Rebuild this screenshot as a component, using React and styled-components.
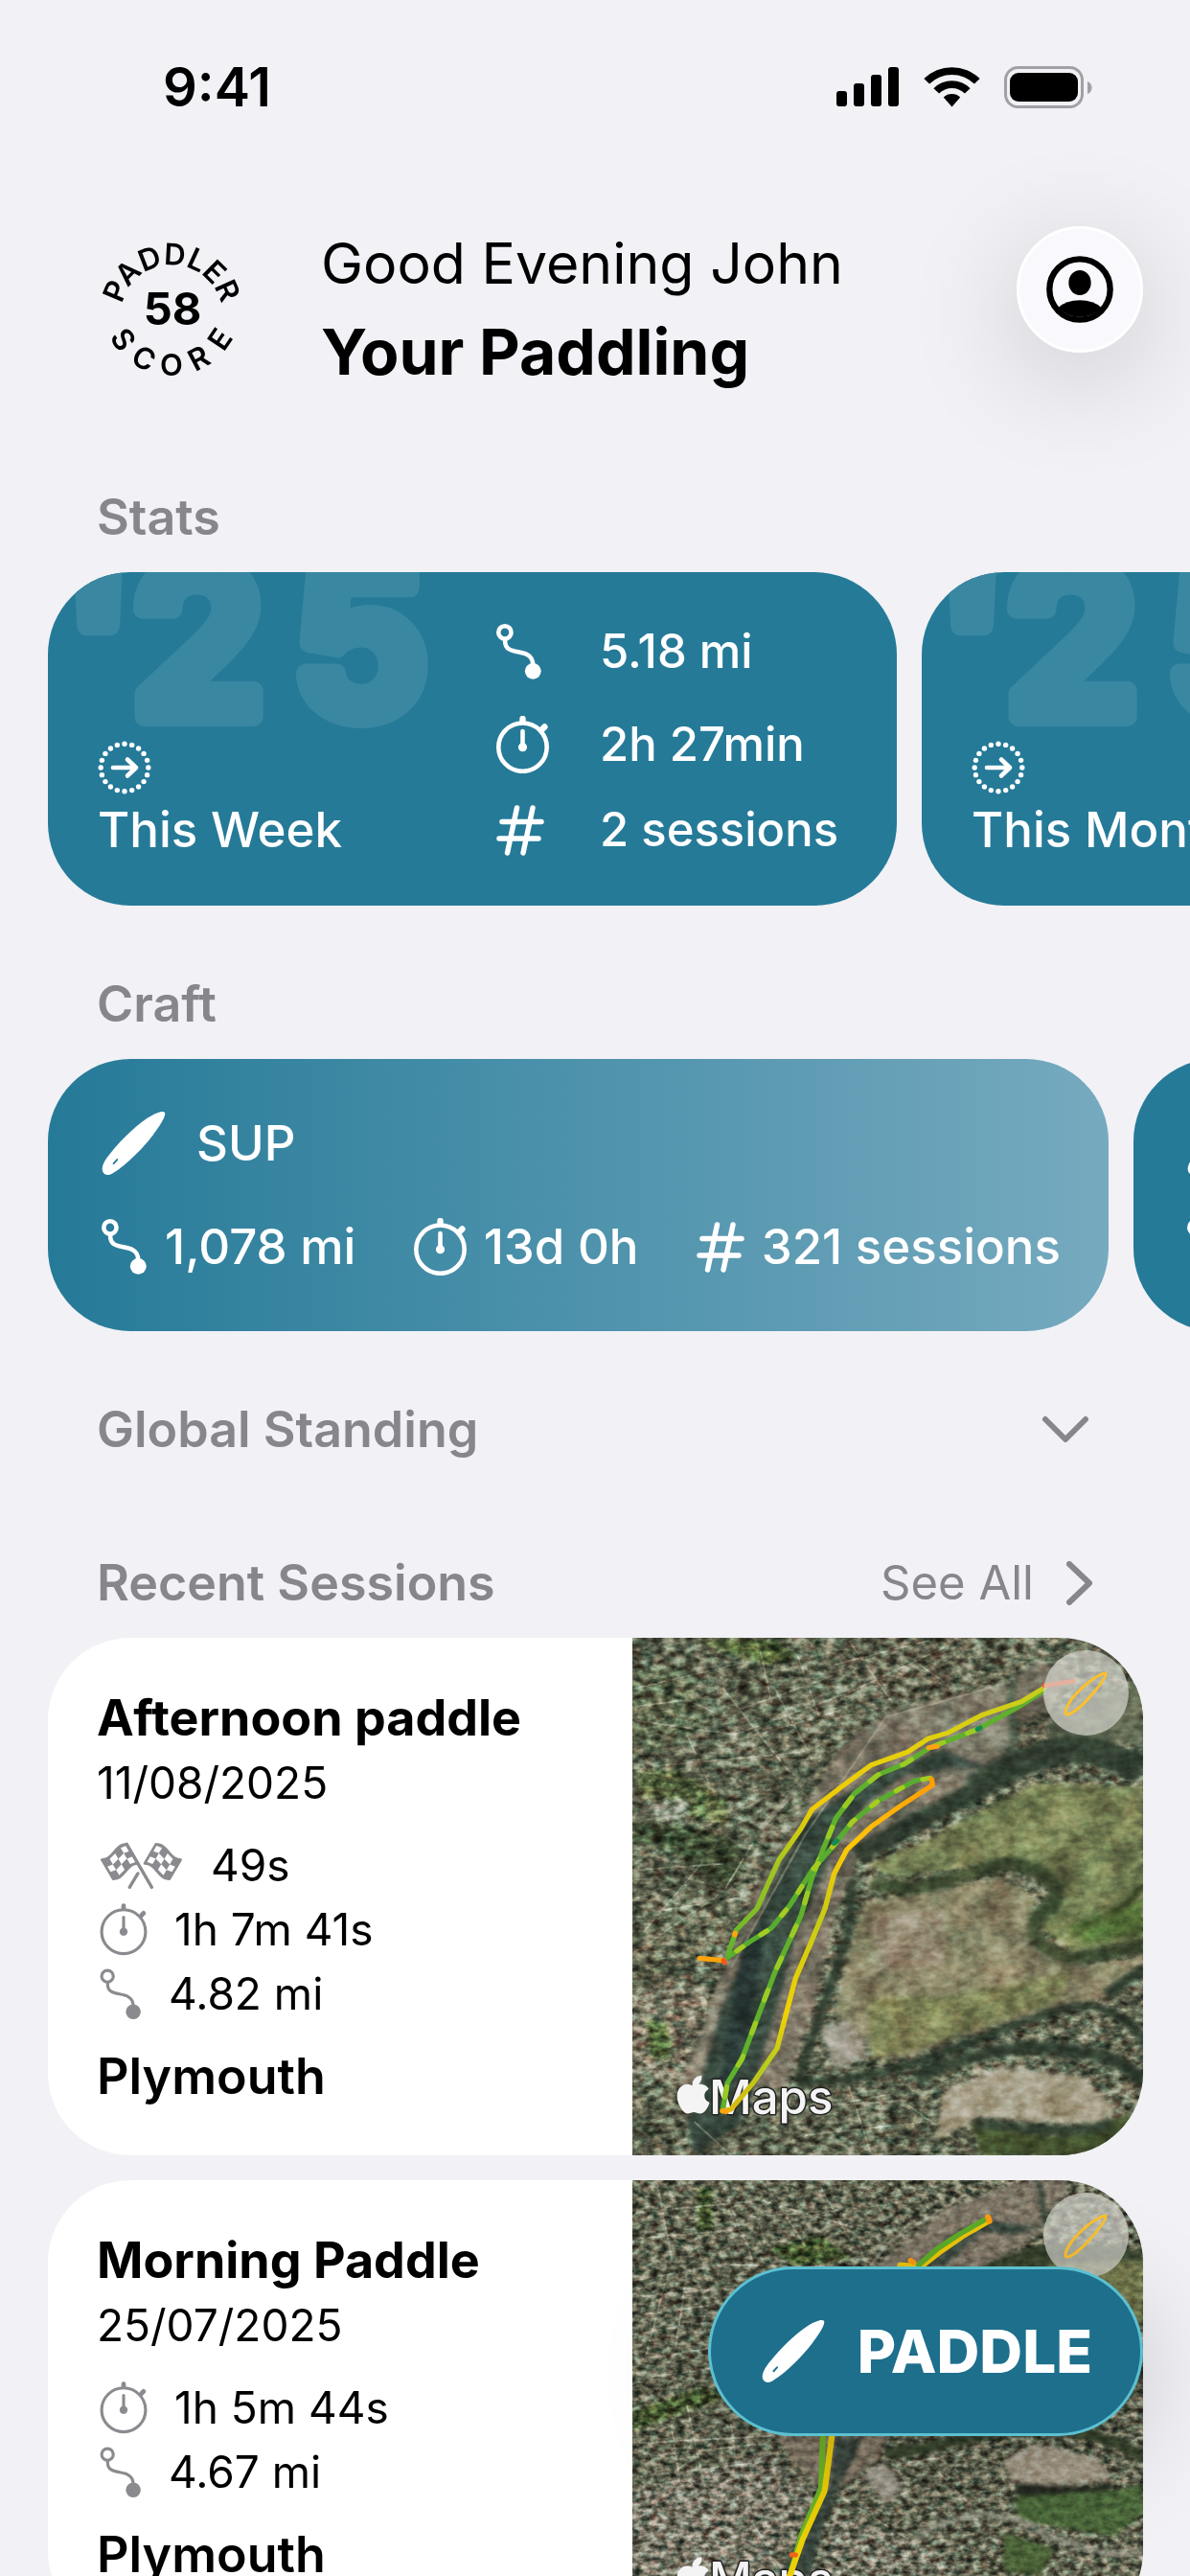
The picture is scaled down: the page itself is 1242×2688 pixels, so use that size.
import React from "react";
import styled, { createGlobalStyle } from "styled-components";
import { FaApple } from "react-icons/fa";

const statCards = [
    { id: "week", label: "This Week", distance: "5.18 mi", time: "2h 27min", sessions: "2 sessions" },
    { id: "month", label: "This Month", distance: "9.85 mi", time: "4h 12min", sessions: "4 sessions" },
];

const craftCards = [
    { id: "sup", name: "SUP", distance: "1,078 mi", time: "13d 0h", sessions: "321 sessions", faded: true },
    { id: "kayak", name: "Kayak", distance: "212 mi", time: "2d 4h", sessions: "48 sessions", faded: false },
];

const sessionList = [
    { id: 1, title: "Afternoon paddle", date: "11/08/2025", best: "49s", time: "1h 7m 41s", distance: "4.82 mi", place: "Plymouth" },
    { id: 2, title: "Morning Paddle", date: "25/07/2025", time: "1h 5m 44s", distance: "4.67 mi", place: "Plymouth" },
];

const StopwatchIcon = ({ size = 48, weight = 3 }) => (
    <svg width={size} viewBox="0 0 48 53" fill="none" stroke="currentColor" strokeLinecap="round" aria-hidden="true">
        <circle cx="24" cy="28.5" r="22" strokeWidth={weight} />
        <path d="M24 2.6V5M42 12l2-2" strokeWidth={weight + 1.6} />
        <path d="M24 14V28" strokeWidth={weight} />
        <circle cx="24" cy="28.5" r="4" fill="currentColor" stroke="none" />
    </svg>
);

const RouteIcon = ({ size = 42, weight = 3.4 }) => (
    <svg width={size} viewBox="0 0 42 51" fill="none" stroke="currentColor" strokeWidth={weight} aria-hidden="true">
        <circle cx="7.8" cy="7.8" r="5.8" />
        <path d="M8 14v2c0 11 13 8 20.500 12.200C32 30 33.500 33 33.500 38" />
        <circle cx="33.500" cy="43.200" r="7.400" fill="currentColor" stroke="none" />
    </svg>
);

const HashIcon = () => (
    <svg width="50" viewBox="0 0 50 53" fill="none" stroke="currentColor" strokeWidth="5.500" strokeLinecap="round" aria-hidden="true">
        <path d="M21.500 3L11.500 50M38 3L28 50M6 17.500H47M3 35H44" />
    </svg>
);

const BoardIcon = ({ size = 67, slot = "#2a7c9a" }) => (
    <svg width={size} viewBox="44 56 202 204" aria-hidden="true">
        <path fill="currentColor" d="M243 61C236 55 215 62 190 78C142 110 92 162 60 205C48 222 43 238 48 248C54 260 66 260 77 254C112 234 170 180 204 135C230 100 248 72 243 61Z" />
        <path d="M82 222L93 210" stroke={slot} strokeWidth="6" strokeLinecap="round" />
    </svg>
);

const ArrowIcon = () => {
    const dots = Array.from({ length: 20 }, (_, i) => (i * Math.PI) / 10);
    return (
        <svg width="56" height="56" viewBox="0 0 56 56" aria-hidden="true">
            {dots.map((a) => (
                <circle key={a} cx={28 + 24.8 * Math.sin(a)} cy={28 - 24.8 * Math.cos(a)} r="2.700" fill="#fff" />
            ))}
            <path d="M16 28H40M31 19.500L40 28L31 36.500" fill="none" stroke="#fff" strokeWidth="4.600" strokeLinecap="round" strokeLinejoin="round" />
        </svg>
    );
};

// point on the waving flag: u runs away from the pole, v runs down it
const flagPoint = (u, v) => {
    const x = 112 - 77 * u + 35 * v;
    const y = 56 + 48 * u + 60 * v - 7 * Math.sin(2 * Math.PI * u);
    return `${x.toFixed(1)},${y.toFixed(1)}`;
};

const flagOutline = [
    ...[0, 0.125, 0.25, 0.375, 0.5, 0.625, 0.75, 0.875, 1].map((u) => flagPoint(u, 0)),
    ...[1, 0.875, 0.75, 0.625, 0.5, 0.375, 0.25, 0.125, 0].map((u) => flagPoint(u, 1)),
].join(" ");

const flagChecks = [];
for (let c = 0; c < 4; c++) {
    for (let r = 0; r < 3; r++) {
        if ((c + r) % 2 === 0) {
            const u = 0.06 + c * 0.22;
            const v = 0.08 + r * 0.28;
            flagChecks.push([flagPoint(u, v), flagPoint(u + 0.22, v), flagPoint(u + 0.22, v + 0.28), flagPoint(u, v + 0.28)].join(" "));
        }
    }
}

const Flag = (props) => (
    <g {...props}>
        <polygon points={flagOutline} fill="currentColor" stroke="currentColor" strokeWidth="8" strokeLinejoin="round" />
        {flagChecks.map((p) => <polygon key={p} points={p} fill="#fff" />)}
    </g>
);

const FlagsIcon = () => (
    <svg width="88" viewBox="28 46 262 154" aria-hidden="true">
        <Flag />
        <Flag transform="translate(315 0) scale(-1 1)" />
        <path d="M112 56L190 190M147 147L121 190" stroke="currentColor" strokeWidth="10" strokeLinecap="round" />
    </svg>
);

const ProfileIcon = () => (
    <svg width="70" viewBox="0 0 210 210" aria-hidden="true">
        <circle cx="105" cy="105" r="95" fill="none" stroke="#000" strokeWidth="19" />
        <ellipse cx="105" cy="84" rx="35" ry="39" />
        <path d="M38 162Q62 139 105 139T172 162A92 92 0 0 1 38 162Z" />
    </svg>
);

const ScoreBadge = () => (
    <svg width="150" height="150" viewBox="0 0 150 150" overflow="visible" fontFamily="Inter, sans-serif" textAnchor="middle">
        <defs>
            <path id="arc-top" d="M25 101A53 53 0 1 1 125 101" />
        </defs>
        <text fontSize="31" fontWeight="600">
            <textPath href="#arc-top" startOffset="50%">PADDLER</textPath>
        </text>
        {["S", "C", "O", "R", "E"].map((letter, i) => (
            <text key={i} x="75" y="146" fontSize="31" fontWeight="600" transform={`rotate(${56 - i * 28} 75 74)`}>{letter}</text>
        ))}
        <text x="76" y="93" fontSize="47" fontWeight="700">58</text>
    </svg>
);

const SignalIcon = () => (
    <svg width="66" height="42" viewBox="0 0 66 42" aria-hidden="true">
        <rect x="0" y="25" width="11" height="16" rx="3" />
        <rect x="18" y="17" width="11" height="24" rx="3" />
        <rect x="36" y="8" width="11" height="33" rx="3" />
        <rect x="54" y="0" width="11" height="41" rx="3" />
    </svg>
);

const WifiIcon = () => (
    <svg width="59" height="42" viewBox="307 62 176 125" aria-hidden="true">
        <path d="M308 98A124 124 0 0 1 482 98L465 114A101 101 0 0 0 325 114Z" />
        <path d="M338 128A80 80 0 0 1 452 128L435 144A57 57 0 0 0 355 144Z" />
        <path d="M369 156A38 38 0 0 1 421 156L395 186Z" />
    </svg>
);

const BatteryIcon = () => (
    <svg width="92" height="44" viewBox="0 0 92 44" aria-hidden="true">
        <rect x="1.500" y="1.500" width="80" height="41" rx="13" fill="none" stroke="#a0a0a5" strokeWidth="3" />
        <rect x="6" y="7" width="71" height="30" rx="9" />
        <path d="M87 16C93 18 93 27 87 29Z" fill="#a0a0a5" />
    </svg>
);

const Grain = ({ id, frequency, seed }) => (
    <filter id={id} x="0" y="0" width="100%" height="100%" colorInterpolationFilters="sRGB">
        <feTurbulence type="fractalNoise" baseFrequency={frequency} numOctaves="3" seed={seed} />
        <feColorMatrix values="1.4 .2 0 0 -.32  1.4 0 .2 0 -.3  1.4 0 .2 0 -.34  0 0 0 0 1" />
    </filter>
);

const MapLabel = ({ y }) => (
    <g fill="#f4f4f4" stroke="#222" strokeWidth="3" paintOrder="stroke" strokeLinejoin="round">
        <FaApple x="42" y={y - 42} size={43} strokeWidth="26" color="#f4f4f4" />
        <text x="80" y={y} fontSize="49" fontFamily="Inter, sans-serif" fontWeight="500">Maps</text>
    </g>
);

const EstuaryMap = () => (
    <MapSvg viewBox="0 0 533 540" preserveAspectRatio="xMidYMid slice" role="img" aria-label="Satellite map of the afternoon route">
        <defs>
            <Grain id="town-a" frequency="0.09 0.14" seed="4" />
            <Grain id="field-a" frequency="0.03" seed="9" />
            <filter id="soft-a" x="-20%" y="-20%" width="140%" height="140%"><feGaussianBlur stdDeviation="7" /></filter>
            <linearGradient id="upper-a" gradientUnits="userSpaceOnUse" x1="1170" y1="190" x2="310" y2="965">
                <stop offset="0" stopColor="#c6cc1e" />
                <stop offset="0.350" stopColor="#e6d00c" />
                <stop offset="0.600" stopColor="#f0cc05" />
                <stop offset="0.750" stopColor="#a8c81e" />
                <stop offset="1" stopColor="#5fb230" />
            </linearGradient>
            <linearGradient id="lower-a" gradientUnits="userSpaceOnUse" x1="870" y1="465" x2="297" y2="1410">
                <stop offset="0" stopColor="#ff9c05" />
                <stop offset="0.250" stopColor="#ffc806" />
                <stop offset="0.450" stopColor="#c6cc14" />
                <stop offset="0.700" stopColor="#f2d005" />
                <stop offset="0.850" stopColor="#b4cc1e" />
                <stop offset="1" stopColor="#e2b80c" />
            </linearGradient>
        </defs>
        <rect width="533" height="540" fill="#66665a" />
        <g transform="scale(.3839 .3635) translate(-52 -52)">
            <g filter="url(#soft-a)">
                <path d="M52 590C150 580 300 590 350 660C360 760 300 800 240 720C180 680 120 640 52 640Z" fill="#3c4634" />
                <path d="M230 60L440 60L500 110L420 130L330 100Z" fill="#56643c" />
                <path d="M60 440L170 430L310 520L310 590L200 560L70 500Z" fill="#606a48" />
                <path d="M52 150L200 130L260 300L120 380L52 360Z" fill="#5c6150" />
                <path d="M700 60L980 60L960 160L760 250L640 180Z" fill="#676458" />
                <path d="M90 520L210 520L190 580L100 560Z" fill="#97948d" />
                <path d="M52 1100L200 1000L260 1100L240 1200L180 1330L52 1300Z" fill="#7f776c" />
                <path d="M90 1140L150 1160L160 1260L100 1260Z" fill="#56673f" />
                <path d="M52 900L260 760L330 860L280 960L52 1060Z" fill="#67685a" />
            </g>
        </g>
        <g transform="scale(.3839 .3635) translate(-52 -52)" fill="none" stroke="#969287" strokeWidth="5" opacity=".7">
            <path d="M60 290L330 330L640 210L900 80M500 100L560 280M300 200L480 440M52 200L330 130M120 420L520 380M640 60L760 240M52 960L300 780L380 640M52 720L300 700M100 840L340 800M180 1000L320 1000M440 200L540 400M60 250L200 230L300 280M340 260L600 160M360 340L620 260M200 330L260 470M400 90L430 240M600 130L860 60M820 120L900 180M60 800L200 760M80 900L240 700M560 1400L760 1360L940 1500M640 1340L700 1530M520 1480L860 1440" />
        </g>
        <rect width="533" height="540" filter="url(#town-a)" opacity=".62" style={{ mixBlendMode: "overlay" }} />
        <g transform="scale(.3839 .3635) translate(-52 -52)">
            <g filter="url(#soft-a)">
                <path d="M180 1340L300 1010L380 790L520 540L640 340L760 260L1060 190L1150 120L1250 150L1180 260L1090 300L1080 430L960 500L840 550L660 690L600 850L570 1000L530 1150L470 1340Z" fill="#7f766a" />
                <path d="M900 300L1040 270L1080 370L1010 410L900 370Z" fill="#8d897d" />
                <path d="M1090 180C1060 260 1120 320 1060 410" fill="none" stroke="#4c5648" strokeWidth="26" />
                <path d="M230 1350L290 1120L390 860L450 720L520 575L640 490L760 420L900 370L1030 430L900 430L790 450L680 540L610 640L560 760L500 900L460 1060L430 1180L380 1350L340 1450L220 1538L200 1440Z" fill="#39473f" />
                <path d="M350 920L420 860L390 1060L330 1330L290 1330Z" fill="#2b3737" />
                <path d="M1190 260L1440 180L1440 360L1180 350Z" fill="#5d6451" />
                <path d="M690 705L860 630L1010 540L1150 470L1440 480L1440 930L1260 960L1150 880L1190 770L1080 690L900 720L760 740Z" fill="#757b54" />
                <path d="M900 600L1150 520L1300 560L1240 680L1080 640Z" fill="#80865c" />
                <path d="M1230 880L1440 800L1440 900L1280 930Z" fill="#56703a" />
                <path d="M680 815L900 770L1060 740L1150 800L1130 930L1280 990L1440 970L1370 1080L1230 1110L1000 1180L760 1270L600 1130L640 950Z" fill="#8a836a" />
                <path d="M690 1080L900 1080L1250 1010L1200 1100L800 1240L700 1260Z" fill="#7f8058" />
                <path d="M700 850L900 830L900 990L720 1010Z" fill="#978a78" />
                <path d="M900 1350L1060 1285L1280 1310L1370 1420L1300 1450L1000 1430L870 1500Z" fill="#a89f8d" />
                <path d="M970 1440L1200 1480L1440 1410L1440 1538L1000 1538Z" fill="#424f2f" />
                <path d="M560 1170L640 1150L700 1250L600 1290Z" fill="#a39c92" />
            </g>
            <g fill="none" stroke="#323c33" strokeLinejoin="round" filter="url(#soft-a)">
                <path d="M660 680C700 650 860 560 1000 480" strokeWidth="54" />
                <path d="M980 485C1100 400 1200 370 1300 375L1440 430" strokeWidth="80" />
                <path d="M700 755C850 800 950 720 1050 705C1150 690 1230 760 1190 830C1110 860 1130 950 1250 970C1350 960 1400 940 1440 940" strokeWidth="40" stroke="#3e4833" />
                <path d="M1440 760C1380 850 1290 870 1240 910" strokeWidth="18" stroke="#47552f" />
                <path d="M650 740L640 900L580 1080L500 1330" strokeWidth="26" />
                <path d="M500 1330C720 1330 900 1240 1050 1180C1150 1140 1250 1100 1300 1110C1400 1130 1440 1200 1450 1230" strokeWidth="24" />
                <path d="M820 1320C900 1270 1100 1200 1250 1240C1350 1240 1400 1290 1450 1330" strokeWidth="40" />
                <path d="M1340 1080L1440 1000" strokeWidth="34" />
                <path d="M980 1450C1050 1440 1200 1490 1350 1450" strokeWidth="28" />
            </g>
            <g fill="none" stroke="#a8a294" strokeWidth="6" opacity=".5">
                <path d="M320 1000L520 620L650 420L740 280L1080 180" />
                <path d="M400 600L520 460" strokeWidth="14" />
                <path d="M220 1440L320 1538M500 1400L800 1380" />
            </g>
        </g>
        <rect width="533" height="540" filter="url(#field-a)" opacity=".3" style={{ mixBlendMode: "overlay" }} />
        <rect width="533" height="540" filter="url(#town-a)" opacity=".26" style={{ mixBlendMode: "overlay" }} />
        <MapLabel y={497} />
        <g transform="scale(.3839 .3635) translate(-52 -52)" fill="none" strokeWidth="14" strokeLinejoin="round" strokeLinecap="round">
            <path stroke="#5fb02c" d="M1168 205L1110 245L990 315L860 368L790 415L720 445L655 500L605 570L570 660L540 740L510 850L440 1010L400 1120L350 1260L310 1330L297 1410" />
            <path stroke="#9acb24" strokeDasharray="30 70" d="M990 315L860 368L790 415L720 445L655 500L605 570L570 660L540 740L510 850L440 1010L400 1120L350 1260L310 1330L297 1410" />
            <path stroke="#58ac2e" d="M860 455L820 462L720 520L650 580L590 660L540 720L480 820L430 885L370 925L310 970" />
            <path stroke="#a5cc20" strokeDasharray="20 60" d="M860 455L820 462L720 520L650 580L590 660L540 720L480 820L430 885L370 925L310 970" />
            <path stroke="url(#lower-a)" d="M297 1410L320 1405L380 1330L445 1230L470 1130L495 1030L540 920L575 830L600 730L635 660L700 595L780 535L868 475L865 458" />
            <path stroke="url(#upper-a)" d="M1172 195L1110 235L1000 275L910 325L855 342L800 380L700 418L620 480L540 545L510 600L450 690L420 760L390 830L335 890L312 960" />
            <path stroke="#ffa40c" d="M300 978L235 972M330 905L331 900M857 368L880 364M297 1410L308 1412" />
            <path stroke="#f4571c" d="M300 978L302 984" />
            <path stroke="#ff5f2c" d="M1250 177L1172 190" />
            <path stroke="#148a52" d="M990 315L997 311M608 635L600 642" />
        </g>
    </MapSvg>
);

const HarbourMap = () => (
    <MapSvg viewBox="0 0 533 474" preserveAspectRatio="xMidYMid slice" role="img" aria-label="Satellite map of the morning route">
        <defs>
            <Grain id="town-b" frequency="0.11 0.16" seed="12" />
            <filter id="soft-b" x="-20%" y="-20%" width="140%" height="140%"><feGaussianBlur stdDeviation="6" /></filter>
        </defs>
        <rect width="533" height="474" fill="#656458" />
        <g transform="scale(.3839 .3333) translate(-52 -75)">
            <g filter="url(#soft-b)">
                <path d="M230 100L270 100L270 240L230 240ZM420 290L560 250L650 320L500 350ZM52 860L300 760L250 720L52 800Z" fill="#4a5935" />
                <path d="M52 1050L200 1000L420 930L540 1060L420 1314L52 1314Z" fill="#7b766e" />
                <path d="M600 1120L780 1190L980 1314L560 1314Z" fill="#77736a" />
            </g>
            <path d="M60 180L400 140L700 240M120 90L160 330M300 100L380 330M60 390L300 340L600 350M60 560L260 520M60 640L280 600M140 400L90 620M70 900L540 870M200 780L260 1100M300 1000L460 1300M100 1000L400 960M580 1040L800 1200M80 440L260 420M60 500L260 470M200 360L170 600M60 700L300 660M160 860L180 1010M320 840L340 1010M100 940L420 900M420 100L520 280M560 90L640 260M280 200L620 170M60 260L360 230M660 1120L820 1040M840 940L960 1080M800 960L980 930" fill="none" stroke="#969287" strokeWidth="6" opacity=".7" />
        </g>
        <rect width="533" height="474" filter="url(#town-b)" opacity=".65" style={{ mixBlendMode: "overlay" }} />
        <g transform="scale(.3839 .3333) translate(-52 -75)">
            <g filter="url(#soft-b)">
                <path d="M700 360L900 170L1060 100L1160 70L1250 90L1180 180L1150 250L1000 360Z" fill="#81776b" />
                <path d="M820 350L900 260L1010 200L1160 220L1100 250L1000 240L900 350Z" fill="#3f4d45" />
                <path d="M1155 80L1175 210" stroke="#3c4a3e" strokeWidth="20" />
                <path d="M980 360C1080 290 1200 240 1440 300L1440 380L1000 400Z" fill="#38432f" />
                <path d="M1180 340L1440 330L1440 520L1300 500Z" fill="#74784f" />
                <path d="M440 880L740 870L720 950L620 1040L560 1040L500 960Z" fill="#827668" />
                <path d="M600 880L680 880L650 960L610 1040L560 1200L540 1314L450 1314L540 1130L590 1020Z" fill="#3a4640" />
                <path d="M740 930C900 920 1000 850 1150 860C1280 850 1380 900 1450 950" fill="none" stroke="#39422f" strokeWidth="36" />
                <path d="M1060 950L1150 900L1320 950L1350 1010L1220 1030L1080 1020Z" fill="#a59b8b" />
                <path d="M1090 1030C1150 1010 1250 1060 1350 1020L1350 1060L1100 1080Z" fill="#272b24" />
                <path d="M1090 1070L1350 1050L1440 1030L1440 1120L1360 1190L1100 1140Z" fill="#4c663a" />
                <path d="M680 1000L740 960L790 1040L740 1090Z" fill="#9d978c" />
                <path d="M820 1200C900 1130 1000 1110 1090 1135C1200 1200 1300 1260 1440 1240" fill="none" stroke="#8e8d80" strokeWidth="18" />
                <path d="M1060 1180L1200 1230L1160 1314L1060 1300Z" fill="#4b6038" />
            </g>
            <path d="M700 345L750 270L960 120" fill="none" stroke="#a8a294" strokeWidth="8" opacity=".5" />
        </g>
        <rect width="533" height="474" filter="url(#town-b)" opacity=".3" style={{ mixBlendMode: "overlay" }} />
        <MapLabel y={434} />
        <g transform="scale(.3839 .3333) translate(-52 -75)" fill="none" strokeWidth="16" strokeLinejoin="round" strokeLinecap="round">
            <path stroke="#f0c80a" d="M1020 205L950 252L890 300L840 345L780 342" />
            <path stroke="#5fae28" d="M1010 200L940 246L880 292L830 342" />
            <path stroke="#ff9c10" d="M1018 192L1022 206M808 328L815 334" />
            <path stroke="#6db526" d="M570 860L565 1040L512 1185L480 1314" />
            <path stroke="#ecd008" d="M596 860L580 1000L574 1050L515 1200L478 1320" />
            <path stroke="#f2641c" d="M486 1249L494 1249" />
        </g>
    </MapSvg>
);

const App = () => {
    return (
        <>
            <GlobalStyle />
            <Page>
                <StatusBar>
                    <Clock>9:41</Clock>
                    <StatusIcons>
                        <SignalIcon />
                        <WifiIcon />
                        <BatteryIcon />
                    </StatusIcons>
                </StatusBar>

                <Header>
                    <ScoreBadge />
                    <Greeting>
                        <GreetingText>Good Evening John</GreetingText>
                        <PageTitle>Your Paddling</PageTitle>
                    </Greeting>
                    <ProfileButton type="button" aria-label="Profile">
                        <ProfileIcon />
                    </ProfileButton>
                </Header>

                <Section>
                    <SectionTitle>Stats</SectionTitle>
                    <CardScroller>
                        {statCards.map((card) => (
                            <StatCard key={card.id}>
                                <Watermark viewBox="0 0 450 200" aria-hidden="true">
                                    <text x="15 87 255" y="151">'25</text>
                                </Watermark>
                                <StatPeriod>
                                    <ArrowIcon />
                                    <span>{card.label}</span>
                                </StatPeriod>
                                <StatRows>
                                    <StatRow>
                                        <StatIcon><RouteIcon size={48} weight={4} /></StatIcon>
                                        {card.distance}
                                    </StatRow>
                                    <StatRow>
                                        <StatIcon><StopwatchIcon size={55} weight={4} /></StatIcon>
                                        {card.time}
                                    </StatRow>
                                    <StatRow $compact>
                                        <StatIcon><HashIcon /></StatIcon>
                                        {card.sessions}
                                    </StatRow>
                                </StatRows>
                            </StatCard>
                        ))}
                    </CardScroller>
                </Section>

                <Section>
                    <SectionTitle>Craft</SectionTitle>
                    <CardScroller>
                        {craftCards.map((craft) => (
                            <CraftCard key={craft.id} $faded={craft.faded}>
                                <CraftName>
                                    <BoardIcon />
                                    {craft.name}
                                </CraftName>
                                <CraftStats>
                                    <CraftStat><RouteIcon size={48} weight={4} />{craft.distance}</CraftStat>
                                    <CraftStat><StopwatchIcon size={55} weight={4} />{craft.time}</CraftStat>
                                    <CraftStat><HashIcon />{craft.sessions}</CraftStat>
                                </CraftStats>
                            </CraftCard>
                        ))}
                    </CardScroller>
                </Section>

                <Section>
                    <ToggleButton type="button" aria-expanded="false">
                        Global Standing
                        <svg width="50" height="30" viewBox="0 0 50 30" aria-hidden="true">
                            <path d="M4 4L25 25L46 4" />
                        </svg>
                    </ToggleButton>
                </Section>

                <Section $wide>
                    <SectionBar>
                        <BarTitle>Recent Sessions</BarTitle>
                        <SeeAll href="#sessions">
                            See All
                            <svg width="28" height="46" viewBox="0 0 28 46" aria-hidden="true">
                                <path d="M3 3L24 23L3 43" />
                            </svg>
                        </SeeAll>
                    </SectionBar>
                    <SessionList id="sessions">
                        {sessionList.map((session) => (
                            <SessionCard key={session.id}>
                                <SessionInfo>
                                    <SessionTitle>{session.title}</SessionTitle>
                                    <SessionDate>{session.date}</SessionDate>
                                    <SessionRows>
                                        {session.best && <SessionRow><FlagsIcon />{session.best}</SessionRow>}
                                        <SessionRow><StopwatchIcon size={50} />{session.time}</SessionRow>
                                        <SessionRow><RouteIcon size={44} weight={3} />{session.distance}</SessionRow>
                                    </SessionRows>
                                    <SessionPlace>{session.place}</SessionPlace>
                                </SessionInfo>
                                <SessionMap>
                                    {session.id === 1 ? <EstuaryMap /> : <HarbourMap />}
                                    <CraftBadge>
                                        <svg width="48" height="48" viewBox="0 0 48 48" aria-hidden="true">
                                            <path d="M45 3C36 4 20 17 11 28C5 36 1 44 4 46C8 47 20 38 29 27C38 17 46 7 45 3Z" />
                                        </svg>
                                    </CraftBadge>
                                </SessionMap>
                            </SessionCard>
                        ))}
                    </SessionList>
                </Section>
            </Page>
            <PaddleButton type="button">
                <BoardIcon size={66} slot="#1d6f8c" />
                PADDLE
            </PaddleButton>
        </>
    );
};

export default App;

const GlobalStyle = createGlobalStyle`
    * {
        box-sizing: border-box;
    }

    body {
        margin: 0;
        background: #f1f1f6;
        color: #000;
        font-family: Inter, "Liberation Sans", sans-serif;
        overflow-x: hidden;
    }

    button {
        font-family: inherit;
    }

    svg {
        display: block;
        flex-shrink: 0;
    }
`;

const Page = styled.main`
    display: flex;
    flex-direction: column;
    overflow: hidden;
`;

const StatusBar = styled.div`
    display: flex;
    align-items: center;
    justify-content: space-between;
    padding: 60px 102px 0 170px;
    line-height: 62px;
`;

const Clock = styled.span`
    font-size: 56px;
    font-weight: 600;
`;

const StatusIcons = styled.div`
    display: flex;
    align-items: center;
    gap: 25px;
`;

const Header = styled.header`
    display: flex;
    align-items: center;
    padding: 106px 49px 0 104px;
`;

const Greeting = styled.div`
    flex: 1;
    margin-left: 81px;
    line-height: 93px;
`;

const GreetingText = styled.p`
    margin: 0;
    font-size: 59px;
`;

const PageTitle = styled.h1`
    margin: 0;
    font-size: 66px;
    font-weight: 700;
    line-height: 93px;
`;

const ProfileButton = styled.button`
    display: flex;
    align-items: center;
    justify-content: center;
    align-self: flex-start;
    width: 132px;
    height: 132px;
    margin-top: 8px;
    border: 3px solid #fff;
    border-radius: 50%;
    background: #f9f9fd;
    box-shadow: 0 24px 120px rgba(0, 0, 0, 0.18);
`;

const Section = styled.section`
    margin-top: ${(props) => (props.$wide ? "100px" : "73px")};

    ${Header} + & {
        margin-top: 96px;
    }
`;

const SectionTitle = styled.h2`
    margin: 0 0 27px;
    padding: 0 101px;
    color: #86868b;
    font-size: 52px;
    font-weight: 600;
    line-height: 60px;
`;

const CardScroller = styled.div`
    display: flex;
    gap: 26px;
    padding-left: 50px;
`;

const TealCard = styled.article`
    flex-shrink: 0;
    overflow: hidden;
    border-radius: 86px;
    background: #257a98;
    color: #fff;
    font-size: 51px;
    font-weight: 500;
    line-height: 60px;
`;

const StatCard = styled(TealCard)`
    position: relative;
    display: grid;
    grid-template-columns: 1fr 354px;
    width: 886px;
    padding: 45px 64px 49px 52px;
`;

const Watermark = styled.svg`
    position: absolute;
    top: 0;
    left: 0;
    width: 450px;
    height: 200px;

    text {
        fill: #3a87a1;
        stroke: #3a87a1;
        stroke-width: 20px;
        stroke-linejoin: round;
        font-size: 222px;
        font-weight: 700;
    }
`;

const StatPeriod = styled.div`
    position: relative;
    display: flex;
    flex-direction: column;
    justify-content: flex-end;
    gap: 7px;
`;

const StatRows = styled.div`
    display: flex;
    flex-direction: column;
    gap: 21px;
    font-size: 49px;
`;

const StatRow = styled.div`
    display: flex;
    align-items: center;
    gap: 52px;
    height: ${(props) => (props.$compact ? "60px" : "76px")};
    white-space: nowrap;
`;

const StatIcon = styled.span`
    flex-shrink: 0;
    width: 56px;
`;

const CraftCard = styled(TealCard)`
    display: flex;
    flex-direction: column;
    gap: 40px;
    width: 1107px;
    padding: 54px 50px 54px 56px;
    background: ${(props) => (props.$faded ? "linear-gradient(90deg, #257a98, #76aabf)" : "#257a98")};
`;

const CraftName = styled.div`
    display: flex;
    align-items: center;
    gap: 32px;
    height: 68px;
`;

const CraftStats = styled.div`
    display: flex;
    justify-content: space-between;
    height: 68px;
`;

const CraftStat = styled.div`
    display: flex;
    align-items: center;
    gap: 18px;
`;

const ToggleButton = styled.button`
    display: flex;
    align-items: center;
    justify-content: space-between;
    width: 100%;
    padding: 0 105px 0 101px;
    border: 0;
    background: none;
    color: #86868b;
    font-size: 52px;
    font-weight: 600;
    line-height: 60px;

    path {
        fill: none;
        stroke: #86868b;
        stroke-width: 6px;
        stroke-linecap: round;
        stroke-linejoin: round;
    }
`;

const SectionBar = styled.div`
    display: flex;
    align-items: center;
    justify-content: space-between;
    padding-right: 101px;
    margin-bottom: 27px;
`;

const BarTitle = styled(SectionTitle)`
    margin: 0;
    padding-right: 0;
`;

const SeeAll = styled.a`
    display: flex;
    align-items: center;
    gap: 34px;
    color: #86868b;
    font-size: 49px;
    line-height: 60px;
    text-decoration: none;

    path {
        fill: none;
        stroke: #86868b;
        stroke-width: 6px;
        stroke-linecap: round;
        stroke-linejoin: round;
    }
`;

const SessionList = styled.div`
    display: flex;
    flex-direction: column;
    gap: 26px;
    padding: 0 49px 0 50px;
`;

const SessionCard = styled.article`
    display: grid;
    grid-template-columns: 8fr 7fr;
    overflow: hidden;
    border-radius: 86px;
    background: #fff;
`;

const SessionInfo = styled.div`
    padding: 50px 0 48px 51px;
`;

const SessionTitle = styled.h3`
    margin: 0;
    font-size: 52px;
    font-weight: 700;
    line-height: 68px;
`;

const SessionDate = styled.p`
    margin: 0;
    font-size: 46px;
    line-height: 67px;
`;

const SessionRows = styled.div`
    margin: 19px 0;
`;

const SessionRow = styled.div`
    display: flex;
    align-items: center;
    gap: 28px;
    padding-left: 3px;
    font-size: 46px;
    line-height: 67px;

    svg {
        color: #8a8a8f;
    }
`;

const SessionPlace = styled.p`
    margin: 0;
    font-size: 52px;
    font-weight: 600;
    line-height: 68px;
`;

const SessionMap = styled.div`
    position: relative;
    overflow: hidden;
`;

const MapSvg = styled.svg`
    position: absolute;
    inset: 0;
    width: 100%;
    height: 100%;
`;

const CraftBadge = styled.span`
    position: absolute;
    top: 13px;
    right: 15px;
    display: flex;
    align-items: center;
    justify-content: center;
    width: 89px;
    height: 89px;
    border-radius: 50%;
    background: rgba(214, 214, 206, 0.7);

    path {
        fill: none;
        stroke: #fbc02d;
        stroke-width: 3px;
        stroke-linejoin: round;
    }
`;

const PaddleButton = styled.button`
    position: fixed;
    right: 49px;
    bottom: 146px;
    display: flex;
    align-items: center;
    gap: 34px;
    height: 177px;
    padding: 0 50px 0 53px;
    border: 3px solid #5cc0d0;
    border-radius: 90px;
    background: #1d6f8c;
    box-shadow: 0 24px 120px rgba(0, 0, 0, 0.2);
    color: #fff;
    font-size: 62px;
    font-weight: 800;
`;
